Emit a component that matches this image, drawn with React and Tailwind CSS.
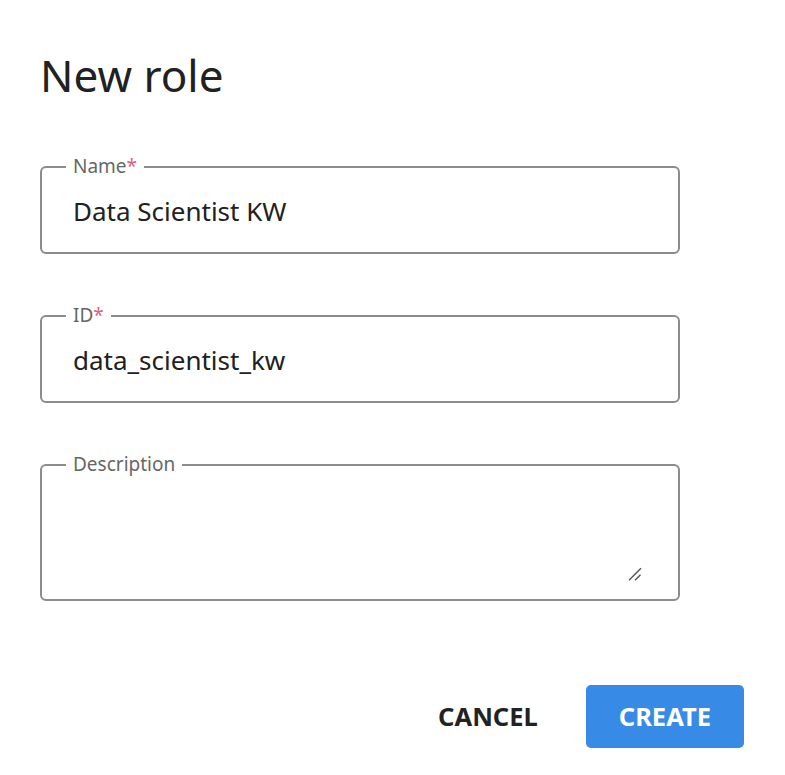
export default function App() {
  const font = { fontFamily: '"Noto Sans", "Open Sans", sans-serif' };
  return (
    <div className="min-h-[775px] w-[785px] bg-white pl-[40px] pr-[41px] pt-[49px]" style={font}>
      <h1 className="text-[44px] leading-[52px] font-normal text-[#212121]">New role</h1>

      <div className="mt-[56px] flex w-[640px] flex-col gap-[52px]">
        <fieldset className="rounded-[6px] border-2 border-[#8c8c8c] p-0">
          <legend className="ml-[24px] px-[7px] text-[19px] leading-[19px] text-[#666666]">
            Name<span className="text-[#e0607c]">*</span>
          </legend>
          <div className="pl-[31px] pt-[17px] pb-[23px] text-[26px] leading-[36px] text-[#212121]">
            Data Scientist KW
          </div>
        </fieldset>

        <fieldset className="rounded-[6px] border-2 border-[#8c8c8c] p-0">
          <legend className="ml-[24px] px-[7px] text-[19px] leading-[19px] text-[#666666]">
            ID<span className="text-[#e0607c]">*</span>
          </legend>
          <div className="pl-[31px] pt-[17px] pb-[23px] text-[26px] leading-[36px] text-[#212121]">
            data_scientist_kw
          </div>
        </fieldset>

        <fieldset className="rounded-[6px] border-2 border-[#8c8c8c] p-0">
          <legend className="ml-[24px] px-[7px] text-[19px] leading-[19px] text-[#666666]">
            Description
          </legend>
          <div className="relative flex pl-[31px] pr-[30px] pt-[15px] pb-[20px]">
            <textarea
              className="h-[90px] w-full resize-none border-0 bg-transparent p-0 text-[26px] leading-[36px] text-[#212121] outline-none"
              style={font}
            />
            <svg
              className="absolute right-[35px] bottom-[18px]"
              width="15"
              height="14"
              viewBox="0 0 15 14"
            >
              <line x1="1" y1="13.3" x2="13" y2="1.3" stroke="#555" strokeWidth="1.5" />
              <line x1="7" y1="13.3" x2="12.5" y2="7.8" stroke="#555" strokeWidth="1.5" />
            </svg>
          </div>
        </fieldset>
      </div>

      <div className="mt-[84px] flex justify-end gap-[15px]">
        <button className="h-[63px] rounded-[5px] px-[33px] text-[25.5px] font-bold text-[#222222]" style={font}>
          CANCEL
        </button>
        <button className="h-[63px] rounded-[5px] bg-[#378ae5] px-[33px] text-[25.5px] font-bold text-white" style={font}>
          CREATE
        </button>
      </div>
    </div>
  );
}
